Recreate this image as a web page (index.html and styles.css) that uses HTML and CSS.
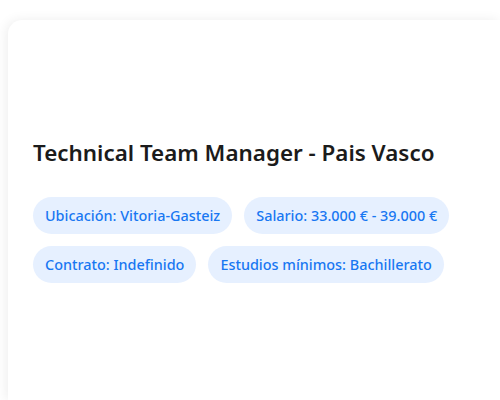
FILE: index.html
```html
<!DOCTYPE html>
<html lang="es">
<head>
    <meta charset="UTF-8">
    <meta name="viewport" content="width=device-width, initial-scale=1.0">
    <title>Technical Team Manager - Pais Vasco</title>
    <link rel="stylesheet" href="styles.css">
</head>
<body>
    <!-- Job Card -->
    <div class="job-card">
        <h1 class="job-title">Technical Team Manager - Pais Vasco</h1>
        <div class="job-tags">
            <span class="tag">Ubicación: Vitoria-Gasteiz</span>
            <span class="tag">Salario: 33.000 € - 39.000 €</span>
            <span class="tag">Contrato: Indefinido</span>
            <span class="tag">Estudios mínimos: Bachillerato</span>
        </div>
    </div>
</body>
</html>
```

FILE: styles.css
```css
/* General Styles */
html, body {
    height: 100%;
}

body {
    margin: 0;
    padding: 20px 0 0 8px;
    box-sizing: border-box;
    display: flex;
    font-family: 'Noto Sans', 'Open Sans', sans-serif;
    background: #ffffff;
    color: #1b1b1b;
    overflow: hidden;
}

.job-card {
    flex: 1;
    box-sizing: border-box;
    padding: 117px 25px 24px;
    background: #ffffff;
    border-radius: 14px 0 0 0;
    box-shadow: -2px 0 12px rgba(0, 0, 0, 0.07);
}

.job-title {
    margin: 0 0 28px;
    font-size: 22.4px;
    font-weight: 600;
    line-height: 32px;
}

/* Tags */
.job-tags {
    display: flex;
    flex-wrap: wrap;
    gap: 12px;
    max-width: 440px;
}

.tag {
    padding: 8px 12px;
    font-size: 14.4px;
    font-weight: 500;
    line-height: 21px;
    color: #1877f2;
    background: #e6f0ff;
    border-radius: 20px;
}
```
